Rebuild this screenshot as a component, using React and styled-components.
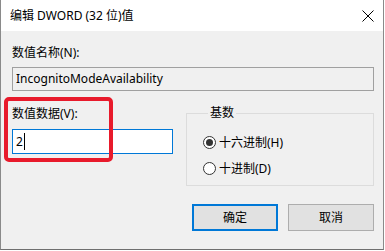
import React from 'react'
import styled, { createGlobalStyle } from 'styled-components'

const GlobalStyle = createGlobalStyle`
  html, body {
    margin: 0;
    padding: 0;
    background: #ffffff;
  }
  body {
    font-family: 'Noto Sans', 'Noto Sans CJK SC', sans-serif;
    font-size: 12px;
    color: #000;
  }
`

const Window = styled.div`
  position: relative;
  width: 382px;
  height: 249px;
  border-left: 1px solid #8a8a8a;
  border-right: 1px solid #8a8a8a;
  border-bottom: 1px solid #6f6f6f;
  display: flex;
  flex-direction: column;
  background: #f0f0f0;
`

const TitleBar = styled.div`
  height: 31px;
  background: #ffffff;
  display: flex;
  align-items: center;
  justify-content: space-between;
  padding: 0 9px 0 9px;
  font-size: 12px;
  line-height: 16px;
`

const CloseButton = styled.div`
  width: 12px;
  height: 12px;
  display: flex;
  svg {
    display: block;
  }
`

const Body = styled.div`
  flex: 1;
  padding: 0 9px 0 11px;
`

const Label = styled.div`
  line-height: 16px;
  margin-top: ${(p) => p.$top || 0}px;
`

const Field = styled.div`
  box-sizing: border-box;
  height: ${(p) => p.$height || 24}px;
  width: ${(p) => (p.$width ? `${p.$width}px` : '100%')};
  margin-top: ${(p) => p.$top || 0}px;
  border: 1px solid ${(p) => (p.$focused ? '#0078d7' : '#a0a0a0')};
  background: ${(p) => (p.$focused ? '#ffffff' : '#f0f0f0')};
  display: flex;
  align-items: center;
  padding-left: 3px;
  line-height: 16px;
`

const Caret = styled.span`
  display: inline-block;
  width: 1px;
  height: 17px;
  background: #000;
  margin-left: 1px;
`

const Row = styled.div`
  display: grid;
  grid-template-columns: 161px 1fr;
  column-gap: 13px;
  margin-top: 9px;
`

const Column = styled.div`
  display: flex;
  flex-direction: column;
`

const GroupBox = styled.fieldset`
  margin: 5px 0 0 0;
  padding: 13px 0 9px 16px;
  border: 1px solid #dcdcdc;
  min-width: 0;
  display: flex;
  flex-direction: column;
  gap: 10px;
`

const Legend = styled.legend`
  margin-left: 5px;
  padding: 0 2px;
  line-height: 16px;
`

const RadioRow = styled.div`
  display: flex;
  align-items: center;
  height: 16px;
  gap: 3px;
`

const RadioCircle = styled.span`
  box-sizing: border-box;
  width: 13px;
  height: 13px;
  border-radius: 50%;
  border: 1px solid #333;
  background: #fff;
  display: flex;
  align-items: center;
  justify-content: center;
  &::after {
    content: '';
    width: 7px;
    height: 7px;
    border-radius: 50%;
    background: #333;
    display: ${(p) => (p.$checked ? 'block' : 'none')};
  }
`

const ButtonRow = styled.div`
  display: flex;
  justify-content: flex-end;
  gap: 10px;
  margin-top: 18px;
`

const Button = styled.div`
  box-sizing: border-box;
  width: 86px;
  height: 27px;
  background: #e1e1e1;
  border: ${(p) => (p.$default ? '2px solid #0078d7' : '1px solid #adadad')};
  display: flex;
  align-items: center;
  justify-content: center;
  line-height: 16px;
`

const Highlight = styled.div`
  position: absolute;
  left: 3px;
  top: 97px;
  width: 109px;
  height: 65px;
  box-sizing: border-box;
  border: 4px solid #e81a2b;
  border-radius: 5px;
  pointer-events: none;
`

const Radio = ({ checked, label }) => (
  <RadioRow>
    <RadioCircle $checked={checked} />
    <span>{label}</span>
  </RadioRow>
)

export default function App() {
  return (
    <>
      <GlobalStyle />
      <Window>
        <TitleBar>
          <span>编辑 DWORD (32 位)值</span>
          <CloseButton>
            <svg width="12" height="12" viewBox="0 0 12 12">
              <path d="M0.5 0.5 L11.5 11.5 M11.5 0.5 L0.5 11.5" stroke="#000" strokeWidth="1" fill="none" />
            </svg>
          </CloseButton>
        </TitleBar>
        <Body>
          <Label $top={14}>数值名称(N):</Label>
          <Field $top={6} $height={24}>IncognitoModeAvailability</Field>
          <Row>
            <Column>
              <Label $top={6}>数值数据(V):</Label>
              <Field $top={7} $height={25} $focused>
                2<Caret />
              </Field>
            </Column>
            <GroupBox>
              <Legend>基数</Legend>
              <Radio checked label="十六进制(H)" />
              <Radio label="十进制(D)" />
            </GroupBox>
          </Row>
          <ButtonRow>
            <Button $default>确定</Button>
            <Button>取消</Button>
          </ButtonRow>
        </Body>
        <Highlight />
      </Window>
    </>
  )
}
